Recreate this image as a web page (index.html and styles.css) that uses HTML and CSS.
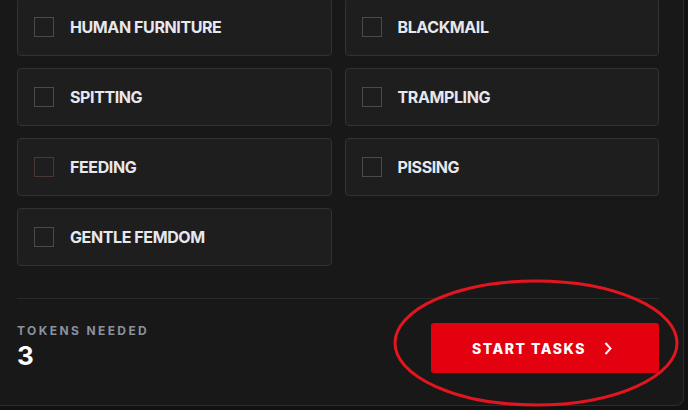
FILE: index.html
```html
<!DOCTYPE html>
<html lang="en">

<head>
    <meta charset="UTF-8">
    <meta name="viewport" content="width=device-width, initial-scale=1.0">
    <title>Choose tasks</title>
    <link rel="stylesheet" href="styles.css">
</head>

<body>
    <div class="panel">
        <div class="task-grid">
            <label class="task"><span class="box"></span>HUMAN FURNITURE</label>
            <label class="task"><span class="box"></span>BLACKMAIL</label>
            <label class="task"><span class="box"></span>SPITTING</label>
            <label class="task"><span class="box"></span>TRAMPLING</label>
            <label class="task"><span class="box hover"></span>FEEDING</label>
            <label class="task"><span class="box"></span>PISSING</label>
            <label class="task"><span class="box"></span>GENTLE FEMDOM</label>
        </div>

        <div class="footer">
            <div class="tokens">
                <div class="tokens-label">TOKENS NEEDED</div>
                <div class="tokens-value">3</div>
            </div>
            <button class="start-button">
                START TASKS
                <svg width="8" height="13" viewBox="0 0 8 13"><path d="M1.5 1 L6.5 6.5 L1.5 12" fill="none" stroke="#fff" stroke-width="2"/></svg>
            </button>
        </div>
    </div>

    <!-- hand drawn circle round the button -->
    <svg class="circle" width="300" height="140" viewBox="0 0 300 140">
        <ellipse cx="150" cy="70" rx="141" ry="62" fill="none" stroke="#e3161f" stroke-width="3"/>
    </svg>
</body>

</html>
```

FILE: styles.css
```css
body {
    margin: 0;
    padding: 0;
    background-color: #111111;
    font-family: Inter, "Noto Sans", sans-serif;
    height: 410px;
    overflow: hidden;
    position: relative;
}

.panel {
    margin-top: -19px;
    margin-left: -1px;
    width: 642px;
    padding: 17px 24px 32px 17px;
    background-color: #181818;
    border: 1px solid #2c2c2c;
    border-top: none;
    border-radius: 0 0 8px 0;
}

.task-grid {
    display: grid;
    grid-template-columns: 1fr 1fr;
    gap: 12px 13px;
}

.task {
    display: flex;
    align-items: center;
    height: 56px;
    padding: 0 16px;
    background-color: #1e1e1e;
    border: 1px solid #323232;
    border-radius: 4px;
    color: #e6e8ee;
    font-size: 16px;
    font-weight: 700;
    letter-spacing: -0.4px;
}

.box {
    width: 18px;
    height: 18px;
    border: 1px solid #4a4a4a;
    margin-right: 16px;
    flex-shrink: 0;
}

.box.hover {
    border-color: #4d3636;
}

.footer {
    margin-top: 32px;
    border-top: 1px solid #2a2a2a;
    padding-top: 24px;
    display: flex;
    justify-content: space-between;
    align-items: flex-start;
}

.tokens-label {
    margin-top: 1px;
    font-size: 12px;
    font-weight: 700;
    letter-spacing: 2.4px;
    color: #8b909c;
    line-height: 14px;
}

.tokens-value {
    margin-top: 4px;
    font-size: 26px;
    font-weight: 700;
    color: #ffffff;
    line-height: 28px;
}

.start-button {
    width: 228px;
    height: 50px;
    background-color: #e3000f;
    border: none;
    border-radius: 3px;
    color: #ffffff;
    font-family: Inter, "Noto Sans", sans-serif;
    font-size: 14px;
    font-weight: 800;
    letter-spacing: 1.5px;
    display: flex;
    align-items: center;
    justify-content: center;
    gap: 18px;
    padding: 0 6px 0 0;
    cursor: pointer;
}

.circle {
    position: absolute;
    left: 386px;
    top: 273px;
}
```
